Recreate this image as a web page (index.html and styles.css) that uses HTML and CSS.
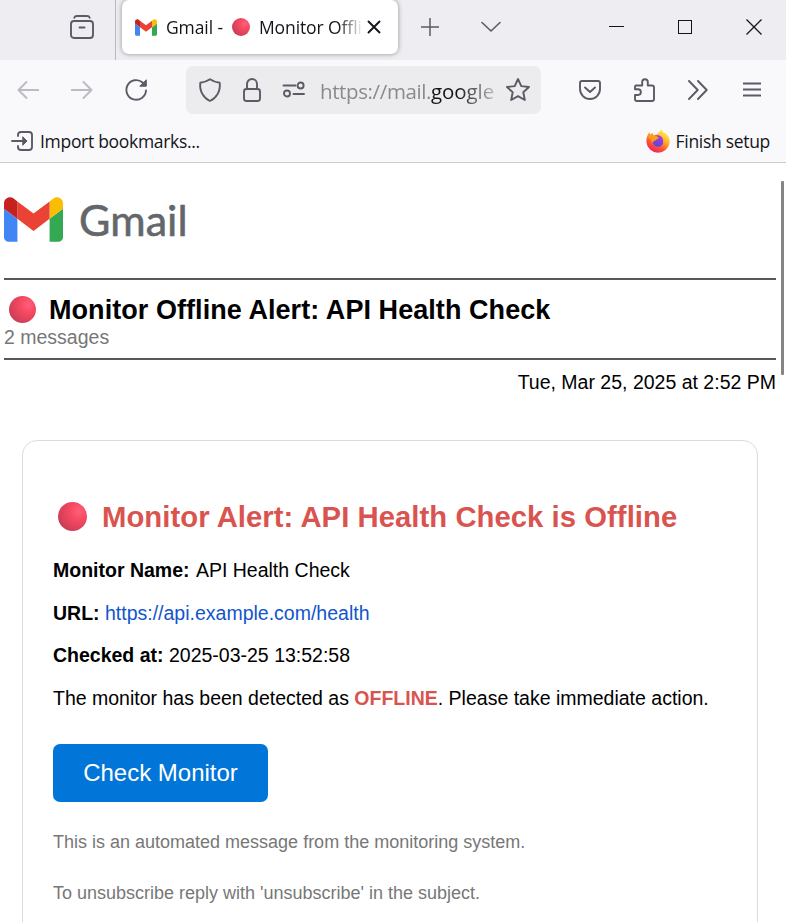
FILE: index.html
```html
<!DOCTYPE html>
<html lang="en">
<head>
<meta charset="utf-8">
<title>Gmail - Monitor Offline Alert: API Health Check</title>
<link rel="stylesheet" href="styles.css">
</head>
<body>
<svg class="defs" aria-hidden="true">
  <symbol id="gmail" viewBox="52 42 88 66">
    <path fill="#4285f4" d="M58 108h14V74L52 59v43c0 3.32 2.69 6 6 6"/>
    <path fill="#34a853" d="M120 108h14c3.32 0 6-2.69 6-6V59l-20 15"/>
    <path fill="#fbbc04" d="M120 48v26l20-15v-8c0-7.42-8.47-11.65-14.4-7.2"/>
    <path fill="#ea4335" d="M72 74V48l24 18 24-18v26L96 92"/>
    <path fill="#c5221f" d="M52 51v8l20 15V48l-5.6-4.2c-5.94-4.45-14.4-.22-14.4 7.2"/>
  </symbol>
</svg>

<header class="chrome">
  <div class="tabstrip">
    <div class="view">
      <svg class="icon" width="26" height="26" viewBox="0 0 26 26"><path d="M5.300 3.800Q5.800 2 8 2h10q2.200 0 2.700 1.800"/><rect x="2" y="7" width="22" height="17" rx="3"/><path d="M10.500 13.500h5"/></svg>
    </div>
    <div class="tab">
      <svg class="tab-logo" width="22" height="17"><use href="#gmail"/></svg>
      <div class="tab-title"><span>Gmail -</span><i class="dot"></i><span>Monitor Offli</span></div>
      <svg class="icon tab-close" width="14" height="14" viewBox="0 0 14 14"><path d="M1.500 1.500l11 11M12.500 1.500l-11 11"/></svg>
    </div>
    <svg class="icon plus" width="18" height="18" viewBox="0 0 18 18"><path d="M9 0v18M0 9h18"/></svg>
    <svg class="icon chevron" width="20" height="12" viewBox="0 0 20 12"><path d="M1 1.500l9 8.500 9-8.500"/></svg>
    <svg class="icon win min" width="15" height="16" viewBox="0 0 15 16"><path d="M0 7.500h15"/></svg>
    <svg class="icon win max" width="14" height="14" viewBox="0 0 14 14"><rect x=".5" y=".5" width="13" height="13"/></svg>
    <svg class="icon win close" width="16" height="16" viewBox="0 0 16 16"><path d="M.5.5l15 15M15.500.5l-15 15"/></svg>
  </div>

  <div class="navbar">
    <svg class="icon off back" width="22" height="18" viewBox="0 0 22 18"><path d="M21.500 9H1.500M9.500 1L1.500 9l8 8"/></svg>
    <svg class="icon off fwd" width="22" height="18" viewBox="0 0 22 18"><path d="M.5 9h20M12.500 1l8 8-8 8"/></svg>
    <svg class="icon reload" width="24" height="24" viewBox="0 0 24 24"><path d="M22 12.500a9.800 9.800 0 1 1-3.400-8l1.400 1.400"/><path class="solid" d="M22.300 2.200v6h-6.200z"/></svg>
    <div class="urlbar">
      <svg class="icon shield" width="24" height="26" viewBox="0 0 24 26"><path d="M12 2.200C9 4.200 5.500 5.300 2.300 5.800 1.300 14 5.500 21 12 24c6.500-3 10.700-10 9.700-18.200C18.500 5.300 15 4.200 12 2.200z"/></svg>
      <svg class="icon lock" width="20" height="26" viewBox="0 0 20 26"><rect x="2" y="12" width="16" height="12" rx="2.500"/><path d="M5 12V7a5 5 0 0 1 10 0v5"/></svg>
      <svg class="icon perms" width="24" height="18" viewBox="0 0 24 18"><path d="M1.500 4.500h12M11.500 13h10.500"/><circle cx="18.600" cy="4.500" r="3"/><circle cx="5" cy="12.500" r="3"/></svg>
      <div class="url">https://mail.<b>google</b></div>
      <svg class="icon star" width="26" height="26" viewBox="0 0 26 26"><path d="M13 2l3.300 7.100 7.700.9-5.700 5.300 1.500 7.700L13 19.200 6.200 23l1.500-7.700L2 10l7.700-.9z"/></svg>
    </div>
    <svg class="icon pocket" width="24" height="22" viewBox="0 0 24 22"><path d="M4 2h16q2 0 2 2v6a10 10 0 0 1-20 0V4q0-2 2-2z"/><path d="M7 8.500l5 4.500 5-4.500"/></svg>
    <svg class="icon puzzle" width="24" height="26" viewBox="0 0 24 26"><path d="M3 8.500h6.200V5a2.800 2.800 0 0 1 5.600 0v3.500H19q2 0 2 2V22q0 2-2 2H4q-2 0-2-2v-4h3a2.900 2.900 0 0 0 0-5.800H2V10q0-1.500 1-1.500z"/></svg>
    <svg class="icon more" width="20" height="20" viewBox="0 0 20 20"><path d="M1 1l8.700 9L1 19M10 1l8.700 9L10 19"/></svg>
    <svg class="icon menu" width="18" height="18" viewBox="0 0 18 18"><path d="M0 2.500h18M0 8.500h18M0 14.500h18"/></svg>
  </div>

  <div class="bookmarks">
    <svg class="icon" width="24" height="20" viewBox="0 0 24 20"><path d="M7 5V4q0-3 3-3h8q3 0 3 3v12q0 3-3 3h-8q-3 0-3-3v-1"/><path d="M1 10h12"/><path class="solid" d="M12 6l4 4-4 4z"/></svg>
    <span class="import">Import bookmarks...</span>
    <svg class="fox" width="24" height="24" viewBox="0 0 24 24">
      <defs>
        <linearGradient id="flame" x1=".8" y1=".05" x2=".25" y2="1"><stop offset="0" stop-color="#fff44f"/><stop offset=".35" stop-color="#ffb52b"/><stop offset=".65" stop-color="#ff5a2e"/><stop offset="1" stop-color="#f1156b"/></linearGradient>
        <linearGradient id="globe" x1=".6" y1="0" x2=".3" y2="1"><stop offset="0" stop-color="#b833e1"/><stop offset="1" stop-color="#4a4fd8"/></linearGradient>
      </defs>
      <path fill="url(#flame)" d="M15.500.3c.4 2 2.200 3.200 3.500 4.300l.3-.6c3.100 2.600 4.600 5.500 4.400 9.300A11.700 11.700 0 0 1 .4 13C.2 9 1.500 5.500 3.500 3l.7 2.700L6.500 4l1 2.400 4-1.400c1.200-1.400 2.800-3 4-4.700z"/>
      <path fill="url(#globe)" d="M9 6.500c5-1.200 8.400 1.600 8.200 6a5.200 5.200 0 0 1-10.400.3c0-1.200.4-2 1.200-2.600z"/>
      <path fill="#ff9a1c" d="M2.200 8l2.200-2.300L6.500 4l1 2.400 3 .3 2.500 2.300c-1 1.400-2.800 1-3.600 2.400-1.400.2-2 1-2.600 2.400z"/>
    </svg>
    <span class="finish">Finish setup</span>
  </div>
</header>

<main class="page">
  <div class="brand"><svg width="59" height="45"><use href="#gmail"/></svg><span>Gmail</span></div>
  <section class="thread">
    <h1><i class="dot"></i><span>Monitor Offline Alert: API Health Check</span></h1>
    <p>2 messages</p>
  </section>
  <p class="date">Tue, Mar 25, 2025 at 2:52 PM</p>
  <article class="card">
    <h2><i class="dot"></i><span>Monitor Alert: API Health Check is Offline</span></h2>
    <p><b>Monitor Name:</b> <span class="name">API Health Check</span></p>
    <p><b>URL:</b> <a>https://api.example.com/health</a></p>
    <p><b>Checked at:</b> 2025-03-25 13:52:58</p>
    <p>The monitor has been detected as <b class="down">OFFLINE</b>. Please take immediate action.</p>
    <a class="button">Check Monitor</a>
    <p class="note">This is an automated message from the monitoring system.</p>
    <p class="note">To unsubscribe reply with 'unsubscribe' in the subject.</p>
  </article>
  <div class="scrollbar"></div>
</main>
</body>
</html>
```
FILE: styles.css
```css
* { box-sizing: border-box; }
body {
  margin: 0;
  height: 922px;
  overflow: hidden;
  background: #fff;
  color: #000;
  font-family: "Liberation Sans", Arial, sans-serif;
}
h1, h2, p { margin: 0; }
svg { display: block; flex: none; }
.defs { position: absolute; width: 0; height: 0; }
.dot {
  display: block;
  flex: none;
  border-radius: 50%;
  background: radial-gradient(circle at 72% 32%, #ff5f7e 0%, #f64a62 30%, #d8405a 65%, #a83a54 100%);
}
.icon { fill: none; stroke: #5b5b66; stroke-width: 1.9; stroke-linecap: round; stroke-linejoin: round; }
.icon .solid { fill: #5b5b66; stroke-width: 1; }

/* Browser chrome */
.chrome {
  height: 163px;
  background: #f9f9fb;
  border-bottom: 1px solid #cccccf;
  font-family: "Open Sans", "Noto Sans", sans-serif;
  color: #15141a;
}
.tabstrip { display: flex; height: 60px; background: #eeedf2; align-items: center; padding-bottom: 6px; }
.view { width: 116px; height: 60px; margin-bottom: -6px; padding: 14px 0 0 69px; border-right: 1px solid #b9b8bf; flex: none; }
.tab {
  display: flex;
  align-items: center;
  width: 276px;
  height: 54px;
  margin: 0 0 0 6px;
  padding: 0 0 0 13px;
  border-radius: 7px;
  background: #fff;
  box-shadow: 0 0 5px rgba(0, 0, 0, .4);
  flex: none;
}
.tab-title {
  display: flex;
  align-items: center;
  width: 196px;
  margin-left: 9px;
  white-space: nowrap;
  font-size: 17.5px;
  letter-spacing: -.1px;
  -webkit-mask-image: linear-gradient(90deg, #000 172px, transparent 197px);
  mask-image: linear-gradient(90deg, #000 172px, transparent 197px);
}
.tab-title .dot { width: 18px; height: 18px; margin: 0 9px 0 9px; }
.tab-close { margin-left: 5px; stroke: #15141a; }
.plus { margin-left: 23px; stroke-width: 1.5; stroke-linecap: butt; }
.chevron { margin-left: 42px; stroke-width: 1.6; }
.win { stroke: #15141a; stroke-width: 1; stroke-linecap: butt; stroke-linejoin: miter; }
.min { margin-left: 108px; }
.max { margin-left: 54px; }
.close { margin-left: 54px; stroke-width: 1.3; }

.navbar { display: flex; align-items: center; height: 60px; padding-left: 17px; }
.off { stroke: #bbbbc1; }
.fwd { margin-left: 32px; }
.reload { margin-left: 31px; }
.urlbar {
  display: flex;
  align-items: center;
  width: 355px;
  height: 48px;
  margin-left: 38px;
  padding-left: 12px;
  border-radius: 7px;
  background: #ececee;
  flex: none;
}
.lock { margin-left: 20px; }
.perms { margin-left: 20px; }
.url {
  width: 176px;
  margin: 2px 0 0 14px;
  white-space: nowrap;
  font-size: 20.5px;
  letter-spacing: -.38px;
  color: #8a8a8e;
  -webkit-mask-image: linear-gradient(90deg, #000 138px, transparent 184px);
  mask-image: linear-gradient(90deg, #000 138px, transparent 184px);
}
.url b { font-weight: 400; color: #15141a; letter-spacing: -.1px; }
.star { margin-left: 9px; }
.pocket { margin-left: 37px; }
.puzzle { margin: 0 0 0 31px; }
.more { margin-left: 31px; }
.menu { margin-left: 35px; }

.bookmarks { display: flex; align-items: center; height: 42px; padding: 0 16px 0 11px; font-size: 17.5px; letter-spacing: -.3px; white-space: nowrap; }
.import { margin-left: 5px; }
.fox { margin-left: auto; }
.finish { margin-left: 6px; }

/* Message */
.page { position: relative; height: 759px; padding: 34px 10px 0 4px; overflow: hidden; font-size: 19.5px; }
.brand { display: flex; height: 81px; font: 400 43px/46px Lato, sans-serif; color: #63676c; }
.brand span { margin-left: 16px; letter-spacing: .1px; -webkit-text-stroke: .6px #63676c; }
.thread { height: 82px; padding-top: 13px; border-top: 2px solid #585858; border-bottom: 2px solid #585858; }
h1 { display: flex; align-items: center; height: 32px; padding-left: 5px; font-size: 27px; letter-spacing: .06px; white-space: nowrap; }
h1 span { padding-top: 2px; }
h1 .dot { width: 27px; height: 27px; margin-right: 13px; }
.thread p { line-height: 22px; margin-top: 1px; color: #777; }
.date { margin-top: 11px; line-height: 22px; text-align: right; }
.card {
  width: 736px;
  height: 500px;
  margin: 47px 0 0 18px;
  padding: 58px 30px 0;
  border: 1px solid #dcdcdc;
  border-radius: 15px;
}
h2 { display: flex; align-items: center; height: 34px; margin-bottom: 16px; padding-left: 5px; font-size: 29.25px; letter-spacing: .05px; color: #d9534f; white-space: nowrap; }
h2 span { padding-top: 3px; }
h2 .dot { width: 29px; height: 29px; margin: 0 15px 0 0; }
.card p { line-height: 42.67px; white-space: nowrap; }
.name { margin-left: 1px; }
.card a { color: #1155cc; }
.down { color: #d9534f; }
.card .button {
  display: block;
  width: 215px;
  height: 58px;
  margin: 24px 0 15px;
  border-radius: 7px;
  background: #0275d8;
  color: #fff;
  font-size: 24px;
  line-height: 58px;
  text-align: center;
}
.card .note { font-size: 18px; line-height: 51px; color: #777; }
.scrollbar { position: absolute; top: 18px; right: 2px; width: 3px; height: 194px; border-radius: 1px; background: #858585; }
```
